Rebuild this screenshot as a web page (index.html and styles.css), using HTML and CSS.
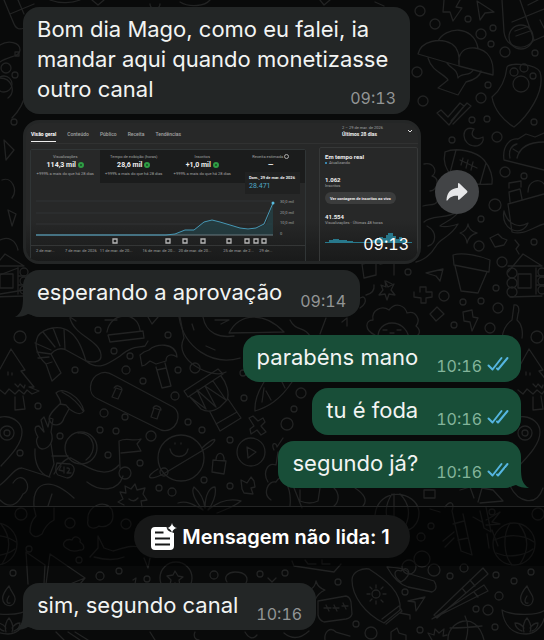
FILE: index.html
```
<!DOCTYPE html>
<html lang="pt-BR">
<head>
    <meta charset="UTF-8">
    <meta name="viewport" content="width=device-width, initial-scale=1.0">
    <title>Conversa</title>
    <link rel="stylesheet" href="styles.css">
</head>
<body>
    <svg class="wallpaper" viewBox="0 0 544 640" preserveAspectRatio="xMinYMin slice" aria-hidden="true">
        <defs>
            <g id="tree">
                <path d="M11 349L25 370L21 371L34 387L29 387L39 391L32 394L27 390L24 394L19 390L15 394L9 389L5 394L0 390M11 349L0 369M15 397L15 410L25 409L23 396M8 372v3M12 373v2M15 384l3 3l2-3l4 4l1-3"/>
            </g>
            <g id="pin">
                <path d="M-8 430C-10 410 22 414 22 432C22 446 6 460 1 466"/>
                <circle cx="7" cy="433" r="7"/><circle cx="7" cy="433" r="3"/>
            </g>
            <g id="lamp">
                <path d="M9 586C2 594 1 600 5 604C9 607 14 606 15 600C16 595 12 594 9 586M9 596C5 602 8 604 10 603M-16 610C-6 616 22 616 28 609C27 625 18 634 8 634C-5 634 -14 626 -16 610M6 632C4 626 7 620 9 618C12 622 14 627 12 632M4 631C0 630-3 626-3 623C1 623 4 625 6 628M14 631C18 630 20 626 20 623C17 623 14 625 12 628"/>
            </g>
            <g id="cabin">
                <path d="M-10 272L5 254L24 266M-10 266h34M0 274h13v14h-13zM18 268v26M18 276h10M18 285h10M-8 297l32-1"/>
                <circle cx="-6" cy="273" r="5"/><circle cx="-6" cy="283" r="5"/><circle cx="-6" cy="292" r="5"/><circle cx="24" cy="272" r="4"/><circle cx="24" cy="281" r="4"/><circle cx="24" cy="290" r="4"/>
            </g>
            <g id="globe">
                <circle cx="-4" cy="544" r="21"/>
                <path d="M-24 540C-10 534 4 534 16 542M-22 553C-10 558 6 556 15 549M-8 523C-16 536-14 556-6 565M1 524C12 538 10 552 2 564"/>
            </g>
        </defs>
        <g class="doodles">
            <use href="#tree"/><use href="#tree" x="518"/>
            <use href="#pin"/><use href="#pin" x="518"/>
            <use href="#lamp"/><use href="#lamp" x="518"/>
            <use href="#cabin"/><use href="#cabin" x="518"/>
            <use href="#globe"/><use href="#globe" x="518"/>

            <!-- top left calculator and left edge -->
            <path d="M4 0L14 24Q17 31 24 28L40 20M10 14L34 4M18 0L24 14M0 45C8 40 20 42 20 50C20 57 8 56 0 62M15 52h4v4h-4z"/>
            <circle cx="6" cy="68" r="5"/><circle cx="15" cy="75" r="3"/><circle cx="4" cy="84" r="8"/><circle cx="14" cy="122" r="3"/>
            <path d="M0 78C12 78 16 92 8 98M26 92C24 102 18 112 12 118M4 140L14 150L6 160ZM2 180C12 176 18 190 12 198M8 210L16 214L12 226ZM0 240C8 236 16 240 18 250"/>
            <path d="M50 0C60 4 72 3 80 0M92 0L98 5L104 0M150 4a5 5 0 1 0 10 0M180 2C190 8 205 6 210 0M320 0L324 5L330 0M375 2l9 4"/>

            <!-- bolt, plane, pills -->
            <path d="M444 0L443 12L450 12L453 21L462 8L456 7L460 0M477 1L480 20L485 13L494 12Z"/>
            <path d="M502 0L504 32C506 48 524 52 533 41L544 36M520 0L534 40M512 22L544 9M528 5l10-5M515 31l14-5M516 36l14-5M540 20l4 8"/>
            <circle cx="521" cy="37" r="12"/>

            <!-- opera shells -->
            <path d="M418 54C421 41 440 37 452 44C458 48 460 55 459 66ZM459 66C457 52 465 47 475 48C489 50 494 61 493 75ZM438 41C445 27 473 24 478 48M428 58C432 72 445 74 448 80L438 88L458 95L466 82C474 80 480 76 481 71M447 63C452 70 457 68 458 78C462 72 470 77 473 70"/>
            <path d="M437 113l4-3l7 7l12-14l4 3l-15 19zM451 121l16-18l4 3l-18 18"/>

            <!-- paw guitar pick, moon, rugby ball -->
            <path d="M492 97C503 88 506 76 507 67C510 62 536 64 540 72C546 92 526 118 514 127C504 121 494 110 492 97"/>
            <circle cx="521" cy="84" r="8"/><circle cx="514" cy="72" r="4"/><circle cx="524" cy="68" r="4"/><circle cx="533" cy="76" r="3"/>
            <path d="M474 129C460 124 461 146 475 146C482 146 484 140 483 137C476 141 469 136 474 129M445 152C456 147 476 151 484 160C491 168 493 178 492 184C478 185 461 184 452 176C446 170 443 161 445 152M456 150L450 173M486 163L480 184M460 160l17 8M463 158l-2 7M468 160l-2 8M473 162l-2 8"/>
            <path d="M504 160C502 146 510 138 518 139L526 134L535 137L544 133M504 160L544 170M510 158C508 150 512 145 517 144M517 158C520 146 530 142 544 142M513 149l5 3"/>
            <path d="M508 204L512 232C524 236 535 226 544 224M508 204L544 194M510 202L509 192L520 189L522 199M509 188v-5l12-2v6M528 192C528 180 540 178 544 184M504 211C500 230 522 238 528 223C520 228 508 226 504 211"/>

            <!-- flames and rocket beside the preview -->
            <path d="M424 164C434 162 438 172 432 176C440 178 438 190 430 191M423 206C430 204 436 206 438 200M424 222C432 214 448 220 460 210C454 220 444 222 440 226C446 228 452 226 458 224C450 238 440 238 436 246C430 256 424 260 416 262M427 226C438 232 436 244 428 246"/>
            <path d="M468 224Q469 231 477 233Q469 235 467 243Q466 235 460 233Q467 231 468 224M490 238L498 234L502 238L507 240L504 245L495 247ZM515 240l4 5l-3 4l3 5M426 273L443 269L440 281L436 276ZM453 255C463 252 481 256 490 260L489 272L454 265ZM455 266L461 291L478 293L487 272M420 292v-5h6v5h6v5l-6 1v5h-5v-5l-7-1v-5M430 314l7-7l7 7l-8 7zM463 312l9-2l1 7l5 1l-6 13l-2-9l-6-1z"/>
            <path d="M514 305C518 304 520 308 518 314L517 320C522 324 523 332 522 338M514 305L512 320C506 324 503 330 502 338"/>

            <!-- behind the "esperando" message -->
            <path d="M0 275L18 268M0 294L24 290M70 317l6 4M105 320h12M148 317L152 324L158 317M180 317L184 338C172 360 213 380 226 372"/>
            <path d="M362 264l14-3v14l-12 3zM380 264l14-3v14M392 284l-6-3M374 285q1 8-8 10M358 300C364 292 370 302 360 308"/>
            <path d="M385 281l3 6l6-3l-3 6l4 5l-6-1l-2 6l-2-6l-6 1l4-5l-2-5l5 2z"/>
            <path d="M375 335C364 330 365 320 373 320C371 310 382 305 389 310C396 301 405 306 407 313C416 310 421 320 416 326C423 332 418 337 412 338"/>
            <path d="M378 338C377 319 405 317 409 338M383 330h4M397 330h4M390 333h4"/>
            <path d="M326 318L320 334M342 322l5-4v8M290 320C296 332 304 326 310 336"/>

            <!-- shrimp and fishing line -->
            <path d="M52 381L46 364C36 355 34 344 38 336C44 328 60 324 70 332C78 338 82 348 86 361L66 350C60 347 54 350 51 354L61 373L52 381M46 364L52 362M37 352L51 354M35 343L51 350M43 332L55 347M53 328L60 346M64 329L65 349M38 358L49 357"/>
            <path d="M70 318C74 336 100 340 101 355C102 364 90 362 86 361C98 371 108 364 120 356C132 346 136 348 145 346L148 341M107 332C110 312 137 310 140 330M108 335L143 331L144 338L110 342Z"/>

            <!-- hammer, mushroom, skateboard -->
            <path d="M140 355L144 352L149 350C155 343 176 342 177 357C171 353 166 355 166 361L156 364L150 361L145 365L142 366ZM156 367L162 388L171 386L165 363M157 370L166 368"/>
            <path d="M56 393C62 386 80 396 84 411C80 417 70 411 66 405L60 404C62 402 59 398 56 393M62 392C72 397 80 405 83 411M60 404C54 410 49 414 49 419C52 428 62 426 64 418L69 409"/>
            <path d="M101 373C88 378 87 395 98 399L161 430C176 434 184 414 173 407L113 375Q107 371 101 373M112 397l4-9l6 2l-4 9zM114 388c2-4 8-2 8 2M151 417l3-9l6 2l-3 9zM153 408c2-4 8-2 8 2"/>

            <!-- drum, burger -->
            <path d="M184 391L218 369L223 374L188 397ZM190 397L201 409Q210 414 220 407L227 400C230 393 226 382 221 376M190 397L206 409L197 390L216 407L205 386L226 400L213 381M210 412L220 431L241 418L228 399M216 424L237 412"/>
            <path d="M179 317C184 348 212 366 240 358M203 317C206 334 220 338 234 336M192 324l2 6M206 346l9 4M215 320h14l-8 4M229 333C240 312 265 312 284 332Z"/>

            <!-- peace hand, astronaut -->
            <path d="M38 437C34 430 34 426 39 426L44 432L41 420L44 417L48 427L50 418L53 419L51 432C55 442 48 449 42 449C37 448 35 440 38 437M35 449C34 464 40 474 49 477L54 464L51 444M52 456h16"/>
            <circle cx="81" cy="448" r="16"/><path d="M78 433C95 432 98 452 86 460M54 474C60 464 66 458 71 458C88 468 106 480 119 465M0 485C10 478 14 468 22 468L50 477M13 483C23 468 34 489 23 494M0 500C12 512 20 500 23 494M34 506C32 484 48 474 74 498M87 482C100 492 118 492 123 476M48 506L52 494"/>
            <path d="M57 463L70 464Q75 466 74 471Q72 478 67 478L58 475Q54 472 57 463M61 466l-2 4l4 1M64 467v6M67 468c5 0 1 4 0 5h4"/>
            <circle cx="125" cy="473" r="6"/><path d="M120 468L119 441C128 437 131 442 141 439L137 444L141 451L121 453"/>

            <!-- planet, lock, play, cross, carrot -->
            <circle cx="181" cy="458" r="23"/><path d="M202 448C215 436 219 438 210 446L165 473C148 482 144 477 158 469M170 449c2 10 16 10 18 0M175 443v1M181 443v1"/><circle cx="164" cy="472" r="4"/>
            <path d="M213 460l13 1l-2 13l-12-2zM216 460c0-9 9-9 8 1"/>
            <circle cx="251" cy="452" r="14"/><path d="M247 447L256 452L248 458ZM249 418l4-2l5 5l5-3l2 4l-4 4l5 6l-5 3l-4-5l-6 4l-1-5l4-3zM255 411C254 396 262 386 264 382M255 411C268 407 280 400 292 382M262 402l2-14M271 400L266 391M285 388l-3-6"/>
            <path d="M241 480l6 3l4-6l3 4l1 6l-4 1l2 6l-9-1l-2-4zM274 450c-4-8 3-8 3-3L283 438M280 454C286 444 290 450 292 460M268 482C262 472 268 462 276 465L278 452M271 500C262 494 268 480 276 482C282 470 292 488 290 506"/>

            <!-- star badge, leaf, pot along the strip -->
            <path d="M120 492L126 493L125 486L131 489L135 484L137 490L145 488L143 494L147 500L141 501L142 507M120 492L123 499L118 502L124 505M129 499q5 4 9-1M178 503C188 500 196 506 203 510C194 500 191 491 194 487C201 493 204 500 205 508C205 494 210 487 215 487C217 495 212 505 208 510C220 500 230 498 241 501C232 508 224 510 217 513"/>
            <path d="M294 488L302 508M300 490v11q10 4 18 0l2-13M334 488C340 494 339 502 334 506M355 488C364 494 368 500 363 506M424 490h11v8h-11zM460 490L470 487L474 498M478 502L482 488L493 490L503 501L480 503M510 486C518 502 536 508 543 488"/>
            <path d="M375 515C378 486 417 490 419 512C420 538 382 538 375 515M392 494C384 506 384 520 394 530M400 494C412 506 410 520 402 531M394 494V531"/>
            <path d="M445 507C450 500 455 502 452 511L461 551L472 555L463 514M480 511L484 528L491 532L486 507M453 524L464 521M458 540L468 538M440 512L430 509M482 522l-9-5M443 541l11-9M445 547l9-9M486 520l14-8l-8 10l8 2l-14 1M492 530l6 16M487 534l2 14"/>

            <!-- sock, clouds, cetacean, party hats -->
            <path d="M34 508L36 516Q30 522 30 532Q34 540 42 534Q46 524 54 520V508M88 520C86 506 106 498 112 510C116 524 106 528 99 526C94 530 86 528 88 520M66 548C60 544 66 538 72 540C74 534 82 538 80 542C86 546 84 551 80 550Q72 553 66 548M90 557L98 548L98 536L104 548L113 551C124 548 132 544 144 548M94 557Q112 562 124 557M26 552L28 584M26 552L45 565L44 584M50 554L46 584M50 554L85 578L70 584M80 584L85 578M144 558L148 568L150 558"/>
            <circle cx="176" cy="578" r="16"/><path d="M175 571l3 5l5 1l-4 3l1 6l-5-3l-5 2l1-5l-4-4l6-1zM227 582c-4-6 2-10 8-10c10 0 14 5 11 11M133 580l3-2l-1 6M268 578l4 4l4-4"/>
            <path d="M292 561L294 566L334 572L341 564M305 560l3 4h8M322 560v4h8"/>

            <!-- bottom strip of doodles -->
            <path d="M56 632L64 640M75 632L88 640M68 632L80 640M150 632l5 8M195 632c-2 4 0 8 4 8M245 632q6 10 12 3M284 633q12 10 25-2"/>
            <path d="M316 581Q318 588 325 590Q318 593 315 600Q313 592 309 590Q315 588 316 581M318 601L346 596Q350 597 351 602L352 614Q351 618 346 619L324 622Q319 620 318 615ZM324 608h7M326 605l3 6M333 608h6M334 605l3 6M342 606h6M343 603l3 6"/>
            <path d="M352 580C352 571 363 568 369 569C386 580 402 592 400 610L384 623C365 614 352 596 352 580M382 619L399 606L402 611L386 624M400 613l10 2v4"/>
            <circle cx="376" cy="594" r="4"/><path d="M376 585v3M376 601v3M367 594h3M383 594h3M370 587l2 2M381 600l2 2M383 587l-2 2M370 601l2-2"/>
            <path d="M387 567C400 568 405 568 410 574L434 581Q439 589 432 592L408 587C398 584 392 576 387 567M401 582C392 576 394 568 401 571C407 564 415 574 401 582M408 601L425 597L416 611L415 602ZM434 615L483 568L488 574L437 618ZM432 619L484 585L488 591ZM470 580l5 6M462 588l4 5M474 592l4 5"/>
            <path d="M448 640C447 622 476 608 484 640M465 616q5 10 1 24M450 628q14 0 32-2M325 640C324 632 330 626 336 632L350 636M391 640v-8l6-4l2 5l7 2v5M432 640l-4-7l6 2l1-6l4 4l5-4l-1 7l4-1"/>
            <circle cx="409" cy="567" r="7"/><circle cx="422" cy="559" r="8"/><circle cx="434" cy="570" r="6"/>

            <!-- dots -->
            <circle cx="420" cy="11" r="5"/><circle cx="435" cy="24" r="5"/><circle cx="468" cy="19" r="3"/><circle cx="481" cy="34" r="5"/><circle cx="493" cy="28" r="3"/><circle cx="491" cy="44" r="3"/><circle cx="505" cy="52" r="5"/><circle cx="535" cy="53" r="3"/><circle cx="417" cy="72" r="5"/><circle cx="488" cy="85" r="3"/><circle cx="481" cy="98" r="5"/><circle cx="423" cy="101" r="5"/><circle cx="472" cy="120" r="3"/><circle cx="487" cy="119" r="3"/><circle cx="497" cy="137" r="5"/><circle cx="452" cy="140" r="3"/><circle cx="505" cy="172" r="5"/><circle cx="524" cy="176" r="3"/><circle cx="495" cy="205" r="6"/><circle cx="481" cy="219" r="3"/><circle cx="534" cy="122" r="3"/>
            <circle cx="479" cy="246" r="5"/><circle cx="502" cy="262" r="5"/><circle cx="534" cy="242" r="3"/><circle cx="408" cy="272" r="3"/><circle cx="444" cy="296" r="5"/><circle cx="496" cy="288" r="3"/><circle cx="463" cy="302" r="3"/><circle cx="481" cy="301" r="3"/><circle cx="498" cy="308" r="5"/><circle cx="454" cy="325" r="3"/><circle cx="490" cy="328" r="5"/>
            <circle cx="20" cy="337" r="6"/><circle cx="98" cy="330" r="3"/><circle cx="168" cy="335" r="3"/><circle cx="114" cy="351" r="3"/><circle cx="130" cy="356" r="3"/><circle cx="75" cy="370" r="3"/><circle cx="126" cy="370" r="4"/><circle cx="143" cy="381" r="3"/><circle cx="178" cy="370" r="3"/><circle cx="195" cy="368" r="5"/><circle cx="175" cy="396" r="4"/><circle cx="38" cy="406" r="3"/><circle cx="104" cy="413" r="4"/><circle cx="125" cy="417" r="3"/><circle cx="100" cy="430" r="3"/><circle cx="116" cy="431" r="3"/><circle cx="151" cy="436" r="5"/><circle cx="60" cy="436" r="3"/><circle cx="188" cy="422" r="3"/><circle cx="202" cy="430" r="3"/><circle cx="20" cy="453" r="3"/><circle cx="108" cy="455" r="3"/><circle cx="140" cy="463" r="3"/><circle cx="159" cy="488" r="3"/><circle cx="172" cy="492" r="4"/><circle cx="204" cy="480" r="3"/>
            <circle cx="301" cy="393" r="5"/><circle cx="287" cy="424" r="6"/><circle cx="294" cy="409" r="3"/><circle cx="244" cy="398" r="3"/><circle cx="230" cy="440" r="3"/><circle cx="230" cy="486" r="3"/><circle cx="243" cy="373" r="3"/><circle cx="537" cy="337" r="6"/>
            <circle cx="21" cy="514" r="6"/><circle cx="70" cy="523" r="5"/><circle cx="126" cy="524" r="5"/><circle cx="29" cy="549" r="3"/><circle cx="79" cy="560" r="3"/><circle cx="13" cy="573" r="3"/><circle cx="100" cy="576" r="4"/><circle cx="119" cy="571" r="3"/><circle cx="147" cy="579" r="3"/><circle cx="214" cy="575" r="4"/><circle cx="260" cy="574" r="3"/><circle cx="285" cy="573" r="3"/><circle cx="421" cy="537" r="4"/><circle cx="431" cy="526" r="3"/><circle cx="492" cy="512" r="3"/><circle cx="538" cy="514" r="6"/><circle cx="338" cy="582" r="3"/><circle cx="405" cy="592" r="3"/><circle cx="450" cy="576" r="3"/><circle cx="464" cy="568" r="4"/><circle cx="496" cy="575" r="3"/><circle cx="514" cy="581" r="3"/><circle cx="499" cy="596" r="4"/><circle cx="476" cy="609" r="3"/><circle cx="488" cy="610" r="5"/><circle cx="356" cy="624" r="3"/><circle cx="371" cy="633" r="6"/><circle cx="420" cy="630" r="3"/><circle cx="495" cy="627" r="3"/><circle cx="531" cy="572" r="3"/>
        </g>
    </svg>

    <main class="chat">
        <div class="bubble received long">
            <p>Bom dia Mago, como eu falei, ia mandar aqui quando monetizasse outro canal</p>
            <time class="time">09:13</time>
        </div>

        <div class="media-row">
            <div class="preview">
                <div class="preview-head">
                    <nav class="tabs">
                        <a href="#" class="active">Visão geral</a>
                        <a href="#">Conteúdo</a>
                        <a href="#">Público</a>
                        <a href="#">Receita</a>
                        <a href="#">Tendências</a>
                    </nav>
                    <div class="period">
                        <div>
                            <span>2 – 29 de mar. de 2026</span>
                            <strong>Últimos 28 dias</strong>
                        </div>
                        <svg width="6" height="4" viewBox="0 0 6 4"><path d="M1 1l2 2l2-2" fill="none" stroke="#ddd"/></svg>
                    </div>
                </div>

                <div class="preview-body">
                    <section class="report">
                        <div class="metrics">
                            <div class="metric selected">
                                <span>Visualizações</span>
                                <strong>114,3 mil <i class="up"></i></strong>
                                <small>+999% a mais do que há 28 dias</small>
                            </div>
                            <div class="metric">
                                <span>Tempo de exibição (horas)</span>
                                <strong>28,6 mil <i class="up"></i></strong>
                                <small>+999% a mais do que há 28 dias</small>
                            </div>
                            <div class="metric">
                                <span>Inscritos</span>
                                <strong>+1,0 mil <i class="up"></i></strong>
                                <small>+999% a mais do que há 28 dias</small>
                            </div>
                            <div class="metric">
                                <span>Receita estimada <i class="clock"></i></span>
                                <strong>—</strong>
                            </div>
                            <div class="tooltip">
                                <span>Dom., 29 de mar. de 2026</span>
                                <strong>28.471</strong>
                            </div>
                        </div>
                        <div class="plot">
                            <svg class="line" viewBox="0 0 240 48">
                                <path d="M0 12H236M0 24H236M0 35H236" stroke="#303234" fill="none"/>
                                <path d="M0 46H130L139 45L149 41H158L168 33L176 31L186 34L196 37L212 41L222 39L230 35L237 14V46Z" fill="#234349" fill-opacity=".7"/>
                                <path d="M0 46H237" stroke="#69797e" fill="none"/>
                                <path d="M0 46H130L139 45L149 41H158L168 33L176 31L184 33L194 36L204 39L212 40L220 39L228 35L237 14" stroke="#4698b5" fill="none"/>
                                <circle cx="237" cy="14" r="1.5" fill="#58bce0"/>
                            </svg>
                            <div class="y-axis"><span>30,0 mil</span><span>20,0 mil</span><span>10,0 mil</span><span>0</span></div>
                        </div>
                        <svg class="markers" viewBox="0 0 240 8">
                            <g fill="none" stroke="#b5b5b5" stroke-width="1.3">
                                <path d="M77 2h4v4h-4zM130 2h4v4h-4zM147 2h4v4h-4zM165 2h4v4h-4zM191 2h4v4h-4zM209 2h4v4h-4zM218 2h4v4h-4zM226 2h4v4h-4z"/>
                            </g>
                        </svg>
                        <div class="x-axis">
                            <span>2 de mar...</span><span>7 de mar. de 2026</span><span>11 de mar. de 20...</span><span>16 de mar. de 20...</span><span>20 de mar. de 20...</span><span>25 de mar. de 2...</span><span>29 de...</span>
                        </div>
                    </section>

                    <aside class="realtime">
                        <h2>Em tempo real</h2>
                        <p class="updating">Atualizando</p>
                        <strong>1.062</strong>
                        <p>Inscritos</p>
                        <button type="button" class="live">Ver contagem de inscritos ao vivo</button>
                        <strong>41.554</strong>
                        <p>Visualizações · Últimas 48 horas</p>
                        <svg class="bars" viewBox="0 0 87 12">
                            <path d="M0 10.5H87" stroke="#28788b"/>
                            <path d="M4 10V8h4V7h6v1h8v1h6v1zM46 10V8h4V7h4V5h4v1h3V3h2V1h5v3h3v3h3V5h3v3h4v2z" fill="#28788b"/>
                        </svg>
                    </aside>
                </div>
                <time class="media-time">09:13</time>
            </div>
            <button type="button" class="forward" aria-label="Encaminhar">
                <svg width="24" height="22" viewBox="0 0 24 22"><path d="M13 3.2Q13 1.4 14.5 2.6L22 9.7Q23 10.7 22 11.7L14.5 18.5Q13 19.6 13 17.8V14.8C7.500 14.500 5 16 2.600 19.300Q1.500 20.300 1.500 18.800C2 11.500 5.800 7.500 13 6.700Z" fill="#e6e7e9"/></svg>
            </button>
        </div>

        <div class="bubble received tail">
            <p>esperando a aprovação</p>
            <time class="time">09:14</time>
        </div>

        <div class="bubble sent first">
            <p>parabéns mano</p>
            <time class="time">10:16</time>
            <svg class="ticks" viewBox="0 0 22 16"><path d="M1.500 9.500L5.500 13.500L14.500 2M10 12.500L11 13.500L20.500 2"/></svg>
        </div>
        <div class="bubble sent">
            <p>tu é foda</p>
            <time class="time">10:16</time>
            <svg class="ticks" viewBox="0 0 22 16"><path d="M1.500 9.500L5.500 13.500L14.500 2M10 12.500L11 13.500L20.500 2"/></svg>
        </div>
        <div class="bubble sent tail">
            <p>segundo já?</p>
            <time class="time">10:16</time>
            <svg class="ticks" viewBox="0 0 22 16"><path d="M1.500 9.500L5.500 13.500L14.500 2M10 12.500L11 13.500L20.500 2"/></svg>
        </div>

        <div class="unread">
            <div class="unread-pill">
                <svg width="28" height="28" viewBox="0 0 28 28">
                    <path d="M5 4H16.500Q17 8 21 9L24 10V23Q24 27 20 27H5Q1 27 1 23V8Q1 4 5 4Z" fill="#fff"/>
                    <path d="M5 9.500H13.500M5 15.500H20M5 21.500H20" stroke="#171818" stroke-width="1.800"/>
                    <path d="M22 0Q22.800 4.200 27 5Q22.800 5.800 22 10Q21.200 5.800 17 5Q21.200 4.200 22 0Z" fill="#fff"/>
                </svg>
                <span>Mensagem não lida: 1</span>
            </div>
        </div>

        <div class="bubble received tail">
            <p>sim, segundo canal</p>
            <time class="time">10:16</time>
        </div>
    </main>
</body>
</html>
```
FILE: styles.css
```
* {
    margin: 0;
    padding: 0;
    box-sizing: border-box;
}

body {
    position: relative;
    min-height: 100vh;
    background-color: #090a0a;
    color: #f2f4f3;
    font-family: Inter, 'Liberation Sans', sans-serif;
    overflow-x: hidden;
}

.wallpaper {
    position: absolute;
    inset: 0;
    width: 100%;
    height: 100%;
}

.doodles {
    fill: none;
    stroke: #222323;
    stroke-width: 1.3;
    stroke-linejoin: round;
    stroke-linecap: round;
}

.chat {
    position: relative;
    display: flex;
    flex-direction: column;
    align-items: flex-start;
    gap: 6px;
    padding: 7px 0 10px;
}

/* message bubbles */
.bubble {
    position: relative;
    display: flex;
    align-items: flex-end;
    margin: 0 23px;
    padding: 7px 14px 10px;
    border-radius: 16px;
    background-color: #232626;
    font-size: 22px;
    line-height: 30px;
}

.time {
    margin-left: 18px;
    color: #929595;
    font-size: 16px;
    font-variant-numeric: tabular-nums;
    line-height: 12px;
}

.long {
    display: block;
    max-width: 387px;
}

/* the time sits at the end of the last line */
.long p {
    display: inline;
}

.long .time {
    float: right;
    margin-top: 18px;
}

.sent {
    align-self: flex-end;
    padding-right: 12px;
    background-color: #184e38;
}

.sent .time {
    color: #83b49b;
}

.first {
    margin-top: 12px;
}

.ticks {
    width: 22px;
    height: 16px;
    margin-left: 5px;
    fill: none;
    stroke: #55b5e0;
    stroke-width: 2;
    stroke-linecap: round;
    stroke-linejoin: round;
}

.tail::after {
    content: "";
    position: absolute;
    bottom: 0;
    width: 24px;
    height: 20px;
    background-color: inherit;
}

.received.tail::after {
    left: -8px;
    clip-path: path("M8 0C8 10 7 16 0 20C6 20 10 19 13 17L24 20V0Z");
}

.sent.tail::after {
    right: -8px;
    clip-path: path("M16 0C16 10 17 16 24 20C18 20 14 19 11 17L0 20V0Z");
}

/* shared screenshot */
.media-row {
    display: flex;
    align-items: center;
    gap: 14px;
    width: 100%;
    padding-left: 23px;
}

.preview {
    position: relative;
    flex: 0 1 398px;
    height: 144px;
    padding: 3px 0 0 4px;
    border: 3px solid #242626;
    border-radius: 16px;
    background: linear-gradient(#272828 70%, #191a1a);
    color: #a2a3a3;
    font-family: Roboto, sans-serif;
    font-size: 4px;
    line-height: 6px;
    overflow: hidden;
}

.preview strong {
    color: #f0f0f0;
    font-weight: 700;
}

.preview-head {
    display: flex;
    justify-content: space-between;
    height: 18px;
    padding: 0 5px 0 1px;
    border-bottom: 1px solid #303131;
}

.tabs {
    display: flex;
    gap: 11px;
    font-size: 5px;
}

.tabs a {
    height: 16px;
    padding-top: 5px;
    color: #a2a3a3;
    font-weight: 500;
    text-decoration: none;
}

.tabs .active {
    border-bottom: 1px solid #eee;
    color: #fff;
    font-weight: 700;
}

.period {
    display: flex;
    align-items: center;
    gap: 24px;
    height: 10px;
}

.period span,
.period strong {
    display: block;
}

.period strong {
    font-size: 5px;
}

.preview-body {
    display: flex;
    align-items: flex-start;
    gap: 13px;
    padding-top: 3px;
}

.report {
    flex: 1;
    height: 120px;
    margin-top: 2px;
    border: 1px solid #303536;
    border-radius: 2px;
}

.metrics {
    position: relative;
    display: grid;
    grid-template-columns: repeat(4, 1fr);
    height: 33px;
    background-color: #1b1c1c;
}

.metric {
    display: flex;
    flex-direction: column;
    align-items: center;
    padding-top: 4px;
    white-space: nowrap;
}

.metric strong {
    display: flex;
    align-items: center;
    gap: 2px;
    font-size: 7px;
    line-height: 10px;
}

.metric small {
    font-size: 4px;
    line-height: 8px;
}

.selected {
    background-color: #272828;
}

.up {
    width: 6px;
    height: 6px;
    border: 2px solid #2f9d44;
    border-radius: 50%;
    background-color: #174d25;
}

.clock {
    display: inline-block;
    width: 5px;
    height: 5px;
    border: 1px solid #aaa;
    border-radius: 50%;
    vertical-align: middle;
}

.tooltip {
    position: absolute;
    top: 22px;
    right: 5px;
    z-index: 1;
    width: 55px;
    padding: 3px 4px;
    background-color: #202121;
    white-space: nowrap;
}

.tooltip span {
    display: block;
    color: #eee;
    font-weight: 700;
}

.tooltip strong {
    display: block;
    color: #4fa9c6;
    font-size: 7px;
    font-weight: 400;
    line-height: 10px;
}

.plot {
    display: flex;
    gap: 4px;
    padding: 6px 0 0 5px;
}

.line {
    width: 240px;
    height: 48px;
}

.y-axis {
    display: flex;
    flex-direction: column;
    justify-content: space-between;
    padding-top: 10px;
    white-space: nowrap;
}

.markers {
    display: block;
    width: 240px;
    height: 8px;
    margin-left: 5px;
}

.x-axis {
    display: grid;
    grid-template-columns: 29fr 35fr 43fr 36fr 45fr 36fr 46fr;
    padding: 2px 0 0 5px;
    border-top: 1px solid #343636;
    white-space: nowrap;
}

.realtime {
    width: 99px;
    height: 120px;
    padding: 5px;
    border: 1px solid #363838;
    border-radius: 2px;
}

.realtime h2 {
    color: #eee;
    font-size: 6px;
    line-height: 7px;
}

.realtime strong {
    display: block;
    font-size: 6px;
    line-height: 7px;
}

.updating {
    display: flex;
    align-items: center;
    gap: 2px;
    margin-bottom: 10px;
}

.updating::before {
    content: "";
    width: 2px;
    height: 2px;
    border-radius: 50%;
    background-color: #3ea6dc;
}

.live {
    height: 12px;
    margin: 3px 0 9px;
    padding: 0 5px;
    border: none;
    border-radius: 6px;
    background-color: #3b3c3c;
    color: #eee;
    font: 700 4px Roboto, sans-serif;
    white-space: nowrap;
}

.bars {
    display: block;
    width: 100%;
    height: 12px;
    margin-top: 6px;
}

.media-time {
    position: absolute;
    right: 9px;
    bottom: 9px;
    color: #fff;
    font: 400 16px/16px Inter, sans-serif;
    font-variant-numeric: tabular-nums;
}

.forward {
    display: grid;
    place-items: center;
    width: 44px;
    height: 44px;
    border: none;
    border-radius: 50%;
    background-color: #424446;
}

/* unread divider */
.unread {
    display: flex;
    justify-content: center;
    width: 100%;
    margin: 12px 0 11px;
    padding: 8px 0;
    border-top: 1px solid #242525;
    background-color: rgba(0, 0, 0, 0.45);
}

.unread-pill {
    display: flex;
    align-items: center;
    gap: 4px;
    padding: 8px 20px 7px 16px;
    border-radius: 22px;
    background-color: #171818;
    color: #fff;
    font-size: 20px;
    font-weight: 600;
    line-height: 28px;
}
```
